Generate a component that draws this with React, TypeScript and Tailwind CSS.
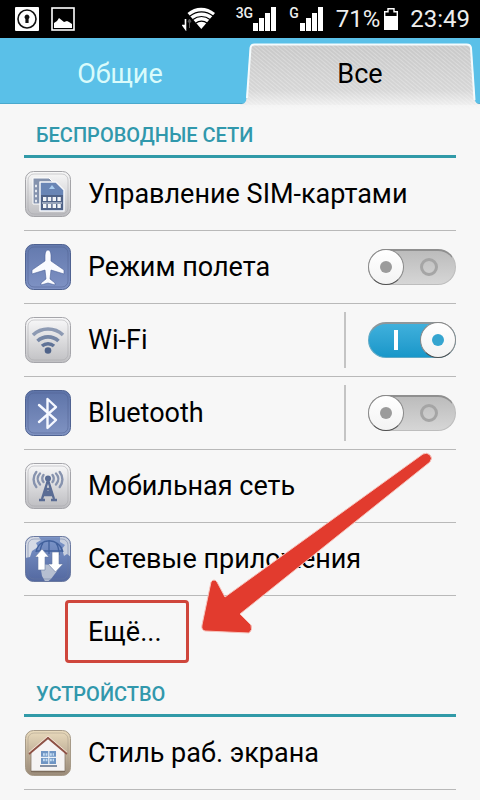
import clsx from 'clsx';
import React, { useState } from 'react';

interface ITile {
  id: string;
  from: string;
  to: string;
  border: string;
  children?: React.ReactNode;
}

// rounded base shared by all of the settings icons
function Tile({ id, from, to, border, children }: ITile) {
  return (
    <svg className="h-12 w-12 shrink-0" viewBox="0 0 48 48" aria-hidden="true">
      <defs>
        <linearGradient id={id} x1="0" y1="0" x2="0" y2="1">
          <stop offset="0" stopColor={from} />
          <stop offset="1" stopColor={to} />
        </linearGradient>
        <clipPath id={`${id}-clip`}>
          <rect x="1" y="1" width="46" height="46" rx="8" />
        </clipPath>
      </defs>
      <rect x="1.5" y="1.5" width="45" height="45" rx="8" fill={`url(#${id})`} />
      <g clipPath={`url(#${id}-clip)`}>{children}</g>
      <rect x="1.5" y="1.5" width="45" height="45" rx="8" fill="none" stroke={border} />
      <rect
        x="4"
        y="4"
        width="40"
        height="40"
        rx="6"
        fill="none"
        stroke={border}
        strokeOpacity="0.5"
      />
    </svg>
  );
}

function SimIcon() {
  return (
    <Tile id="sim" from="#f8f8f8" to="#bcbcc0" border="#a4a4a8">
      <path d="M9 8h16l4 4v22H9z" fill="#8492ad" stroke="#fff" strokeWidth="1" />
      <path
        d="M11 16h3m-3 5h3m-3 5h3m-3 5h3"
        stroke="#e4e8ef"
        strokeWidth="2.5"
        strokeDasharray="2 1"
      />
      <path
        d="M16 12h16l8 8v21H16z"
        fill="#6985b5"
        stroke="#f6f7fa"
        strokeWidth="1.5"
        strokeLinejoin="round"
      />
      <path d="M28 15l3 4h-6z" fill="#a9cdf0" />
      <path d="M17 25h22v15H17z" fill="#4f6287" />
      <path d="M19 29h18M19 36h18" stroke="#f1f3f7" strokeWidth="4" strokeDasharray="3.4 1.4" />
      <path d="M18 33h20" stroke="#dfe4ec" strokeWidth="1" />
    </Tile>
  );
}

function PlaneIcon() {
  return (
    <Tile id="plane" from="#6379ad" to="#7f92c4" border="#4f6291">
      <path
        d="M24 7c-2 0-3 3-3 6v5L8 27v4l13-4 1 9-5 4v2l7-2 7 2v-2l-5-4 1-9 13 4v-4l-13-9v-5c0-3-1-6-3-6z"
        fill="#fafbff"
        stroke="#4d639a"
        strokeWidth="0.6"
      />
    </Tile>
  );
}

function WifiIcon() {
  return (
    <Tile id="wifi" from="#f9f9fa" to="#c0c0c3" border="#a5a5aa">
      <g fill="none" strokeWidth="3.6">
        <path d="M9 19c8.500-8 21.500-8 30 0" stroke="#8d9ab3" />
        <path d="M13.500 25c6-5.500 15-5.500 21 0" stroke="#7586a5" />
        <path d="M18 30c3.500-3 8.500-3 12 0" stroke="#607397" />
      </g>
      <circle cx="24" cy="34.500" r="3.300" fill="#4f6389" />
    </Tile>
  );
}

function BluetoothIcon() {
  return (
    <Tile id="bt" from="#5d73a8" to="#8093c2" border="#4f6291">
      <path
        d="M15 16l17 15-8.500 8V10l8.500 8-17 15"
        fill="none"
        stroke="#f5f8ff"
        strokeWidth="2.400"
        strokeLinejoin="round"
        strokeLinecap="round"
      />
    </Tile>
  );
}

function TowerIcon() {
  return (
    <Tile id="tower" from="#f9f9fa" to="#bcbcc0" border="#a5a5aa">
      <g fill="none" stroke="#5a6c94" strokeWidth="2.400">
        <path d="M24 18l-6 19M24 18l6 19M20.500 27h7M19 33h10M20 28l9 5M28 28l-9 5" />
        <path d="M15 38h6M27 38h6" strokeWidth="2.600" />
        <circle cx="24" cy="16.500" r="1.800" fill="#63749a" />
      </g>
      <g fill="none" stroke="#8793ae" strokeWidth="2.400" strokeLinecap="round">
        <path d="M19.500 13c-1.500 2-1.500 5 0 7M28.500 13c1.500 2 1.500 5 0 7" />
        <path d="M16 11.500c-3 3-3 7.500 0 11M32 11.500c3 3 3 7.500 0 11" />
        <path d="M12.300 10c-3.600 4.500-3.600 10.500 0 15M35.700 10c3.600 4.500 3.600 10.500 0 15" />
      </g>
    </Tile>
  );
}

function GlobeIcon() {
  return (
    <Tile id="globe" from="#7d97cb" to="#5368a0" border="#6a79a0">
      <path d="M1 1h13l3 4-5 3 2 4-6 4-2 6-5 1z" fill="#d5dae5" />
      <path d="M36 1h11v21l-4-3-3 2-2-7 3-4-5-3z" fill="#c9d0df" />
      <path d="M16 29l11 1 6 6-6 8-5 4-4-7z" fill="#b6bfd1" />
      <g fill="none" stroke="#41609c" strokeWidth="1.300">
        <path d="M12 17c3-15 23-15 27 0M12 16h27M25 6v13M19 8c-3 4-3 8-3 12M32 8c3 4 3 8 3 12" />
      </g>
      <path
        d="M18 14l7 8h-4v13h-7V22h-3zM28 17h7v12h4l-7.500 8-7.500-8h4z"
        fill="#fff"
        stroke="#6779a3"
        strokeWidth="0.600"
      />
    </Tile>
  );
}

function HouseIcon() {
  return (
    <Tile id="house" from="#eadbbd" to="#998977" border="#a69a88">
      <path d="M7 22L24 8l17 14v21H7z" fill="#f5f3f3" stroke="#8b7b6c" strokeWidth="0.800" />
      <path
        d="M5 25L24 9l19 16"
        fill="none"
        stroke="#8e5145"
        strokeWidth="1.800"
        strokeLinejoin="round"
      />
      <path d="M5 23.200L24 7l19 16.200" fill="none" stroke="#f3ddd0" strokeWidth="1" />
      <rect x="17" y="22" width="15" height="13" fill="#6f95c4" />
      <path
        d="M19 25.500h5M26 25.500h4M19 31h5M26 31h4"
        stroke="#c3dcf3"
        strokeWidth="2.600"
        strokeDasharray="1.800 0.800"
      />
      <path d="M17 28.300h15M24.800 22v13" stroke="#ecf2f8" strokeWidth="1.200" />
      <path d="M16 37h17" stroke="#5e6f8a" strokeWidth="1.600" />
      <path d="M7 42.500h34" stroke="#7b6b5a" strokeWidth="1.400" />
    </Tile>
  );
}

interface ISwitch {
  id: string;
  checked: boolean;
  onChange: (v: boolean) => void;
}

function Switch({ id, checked, onChange }: ISwitch) {
  return (
    <span className="relative block h-9 w-[88px]">
      <input
        id={id}
        type="checkbox"
        checked={checked}
        onChange={(e) => onChange(e.target.checked)}
        className={clsx(
          'block h-full w-full cursor-pointer appearance-none rounded-full border border-t-2',
          checked
            ? 'border-[#5fa9c6] border-t-[#8e979b] bg-linear-to-b from-[#3fb0dc] to-[#1797c9]'
            : 'border-[#bdbdbd] border-t-[#8f8f8f] bg-linear-to-b from-[#bcbcbc] to-[#d6d6d6]'
        )}
      />
      {checked ? (
        <span className="pointer-events-none absolute top-2 left-[26px] h-5 w-1 bg-white" />
      ) : (
        <span className="pointer-events-none absolute top-[9px] right-[18px] h-[18px] w-[18px] rounded-full border-3 border-[#a5a5a5]" />
      )}
      <span
        className={clsx(
          'pointer-events-none absolute top-0 flex h-9 w-9 items-center justify-center rounded-full border border-[#8a8a8a] border-b-[#4f4f4f] bg-linear-to-b from-white to-[#f3f3f3]',
          checked ? 'right-0' : 'left-0'
        )}
      >
        <span
          className={clsx('h-3 w-3 rounded-full', checked ? 'bg-[#35a5d0]' : 'bg-[#9b9b9b]')}
        />
      </span>
    </span>
  );
}

interface IRow {
  icon: React.ReactNode;
  label: string;
}

const rowStyle =
  'flex min-h-[73px] w-full items-center gap-4 border-b border-[#b9b9b9] text-left';

function LinkRow({ icon, label }: IRow) {
  return (
    <li>
      <button type="button" className={rowStyle}>
        {icon}
        <span>{label}</span>
      </button>
    </li>
  );
}

function SwitchRow({
  icon,
  label,
  divided = false,
  ...rest
}: IRow & ISwitch & { divided?: boolean }) {
  return (
    <li className={rowStyle}>
      {icon}
      <label htmlFor={rest.id} className="grow">
        {label}
      </label>
      <span className={clsx('flex h-14 items-center pl-[22px]', divided && 'border-l-2 border-[#c4c4c4]')}>
        <Switch {...rest} />
      </span>
    </li>
  );
}

function SectionTitle({ children }: { children: React.ReactNode }) {
  return (
    <h2 className="border-b-3 border-[#319aa8] px-3 pt-[13px] pb-2 text-xl leading-6 font-medium text-[#3198ac] uppercase">
      {children}
    </h2>
  );
}

function SignalBars() {
  return (
    <svg className="h-6 w-6" viewBox="0 0 24 24" fill="#fff" aria-hidden="true">
      <path d="M0 16h5v8H0zM6 11h5v13H6zM12 6h5v18h-5zM18 0h5v24h-5z" />
    </svg>
  );
}

function StatusBar() {
  return (
    <div className="flex h-[38px] items-center bg-black pr-[10px] pl-[15px] text-2xl text-[#eee]">
      <svg className="h-6 w-6" viewBox="0 0 24 24" aria-hidden="true">
        <rect width="24" height="24" rx="1" fill="#fff" />
        <circle cx="12" cy="12" r="9" fill="none" stroke="#111" strokeWidth="1.600" />
        <path d="M12 7.500a2.500 2.500 0 0 1 1.600 4.400V16h-3.200v-4.100A2.500 2.500 0 0 1 12 7.500z" fill="#111" />
      </svg>
      <svg className="ml-3 h-6 w-6" viewBox="0 0 24 24" aria-hidden="true">
        <rect x="1" y="1" width="22" height="22" fill="none" stroke="#fff" strokeWidth="1.600" />
        <path d="M3 21v-5l3-2 2-3 5 4 3-1 2 1 3 2v4z" fill="#fff" />
      </svg>
      <div className="ml-auto flex items-center">
        <svg className="h-6 w-[34px]" viewBox="0 0 34 24" aria-hidden="true">
          <path d="M3.500 12v9M1 18.500h2.500V22z" fill="#fff" stroke="#fff" strokeWidth="1.600" />
          <path d="M7.500 21v-7M6 15l1.500-3L9 15z" fill="#555" stroke="#555" />
          <path d="M5.500 6c8-7 19-7 27.500 0L19.300 22z" fill="#fff" />
          <g fill="none" stroke="#000" strokeWidth="1.200">
            <path d="M8 9c7-5.500 16-5.500 23 0M11 12.500c5-4 12-4 17 0M14 16c3-2.500 8-2.500 11 0" />
          </g>
        </svg>
        <span className="ml-5 self-start text-sm leading-5 font-medium">3G</span>
        <SignalBars />
        <span className="ml-3 self-start text-sm leading-5 font-medium">G</span>
        <span className="ml-px">
          <SignalBars />
        </span>
        <span className="ml-3">71%</span>
        <svg className="ml-1 h-6 w-[14px]" viewBox="0 0 14 24" aria-hidden="true">
          <path d="M.7 4.700h3.300v-3h6v3h3.300v17H.7z" fill="#000" stroke="#fff" strokeWidth="1.400" />
          <path d="M0 9h14v14H0z" fill="#fff" />
        </svg>
        <span className="ml-3">23:49</span>
      </div>
    </div>
  );
}

function TabShape() {
  return (
    <svg
      className="absolute inset-0 h-full w-full"
      viewBox="0 0 240 72"
      preserveAspectRatio="none"
      aria-hidden="true"
    >
      <defs>
        <linearGradient id="tab-fill" x1="0" y1="0" x2="0" y2="1">
          <stop offset="0" stopColor="#c8c8c8" />
          <stop offset="0.700" stopColor="#d6d6d6" />
          <stop offset="1" stopColor="#f7f7f7" />
        </linearGradient>
        <pattern
          id="tab-lines"
          width="3"
          height="3"
          patternUnits="userSpaceOnUse"
          patternTransform="rotate(40)"
        >
          <path d="M0 0h3" stroke="#fff" strokeWidth="1.200" strokeOpacity="0.450" />
        </pattern>
      </defs>
      <path d="M0 66c5 0 6-2 6.500-6L10 10q.5-4 4-4h213q4 0 4.500 4l3.500 52q.5 4 5 4v6H0z" fill="url(#tab-fill)" />
      <path d="M0 66c5 0 6-2 6.500-6L10 10q.5-4 4-4h213q4 0 4.500 4l3.500 52q.5 4 5 4v6H0z" fill="url(#tab-lines)" />
      <path
        d="M7 60L10.500 10q.5-3.500 4-3.500h212q4 0 4.500 3.500l3.500 52"
        fill="none"
        stroke="#f4fbfd"
        strokeWidth="2"
      />
      <path d="M0 67h240v5H0z" fill="#f7f7f7" fillOpacity="0.600" />
    </svg>
  );
}

function Arrow() {
  return (
    <svg
      className="pointer-events-none absolute bottom-8 left-[176px] h-[186px] w-[236px]"
      viewBox="0 0 236 186"
      aria-hidden="true"
    >
      <path
        d="M11 131q3-4 6 0l8 15L223 3q4-2 7 1t0 7L40 163l11 11q2 5-2 8L5 180q-4-1-3-6z"
        fill="#e23b2e"
        stroke="#f7c4bd"
        strokeWidth="1"
      />
    </svg>
  );
}

export default function App() {
  const [tab, setTab] = useState('all');
  const [plane, setPlane] = useState(false);
  const [wifi, setWifi] = useState(true);
  const [bluetooth, setBluetooth] = useState(false);

  const tabs = [
    { key: 'general', label: 'Общие' },
    { key: 'all', label: 'Все' },
  ];

  return (
    <div className="min-h-screen bg-[#f7f7f7] font-[Roboto,'Noto_Sans',sans-serif] text-black">
      <StatusBar />
      <nav className="flex h-[66px] border-b border-[#4aa9cd] bg-[#5ac0e8]">
        {tabs.map((t) => (
          <button
            key={t.key}
            type="button"
            onClick={() => setTab(t.key)}
            className={clsx(
              'relative h-[72px] flex-1 text-[27px]',
              tab === t.key ? 'text-black' : 'text-[#d9fbfb]'
            )}
          >
            {tab === t.key && <TabShape />}
            <span className="relative">{t.label}</span>
          </button>
        ))}
      </nav>

      <main className="px-6 pt-[6px] pb-2 text-[27px] leading-8">
        <section>
          <SectionTitle>Беспроводные сети</SectionTitle>
          <ul className="relative">
            <LinkRow icon={<SimIcon />} label="Управление SIM-картами" />
            <SwitchRow
              id="plane-mode"
              icon={<PlaneIcon />}
              label="Режим полета"
              checked={plane}
              onChange={setPlane}
            />
            <SwitchRow
              id="wifi-mode"
              icon={<WifiIcon />}
              label="Wi-Fi"
              divided
              checked={wifi}
              onChange={setWifi}
            />
            <SwitchRow
              id="bluetooth-mode"
              icon={<BluetoothIcon />}
              label="Bluetooth"
              divided
              checked={bluetooth}
              onChange={setBluetooth}
            />
            <LinkRow icon={<TowerIcon />} label="Мобильная сеть" />
            <LinkRow icon={<GlobeIcon />} label="Сетевые приложения" />
            <li className="flex min-h-[73px] items-start pt-1 pl-[41px]">
              <button
                type="button"
                className="h-[63px] rounded-sm border-3 border-[#cf463c] pr-6 pl-5"
              >
                Ещё...
              </button>
            </li>
            <Arrow />
          </ul>
        </section>

        <section>
          <SectionTitle>Устройство</SectionTitle>
          <ul>
            <LinkRow icon={<HouseIcon />} label="Стиль раб. экрана" />
          </ul>
        </section>
      </main>
    </div>
  );
}
